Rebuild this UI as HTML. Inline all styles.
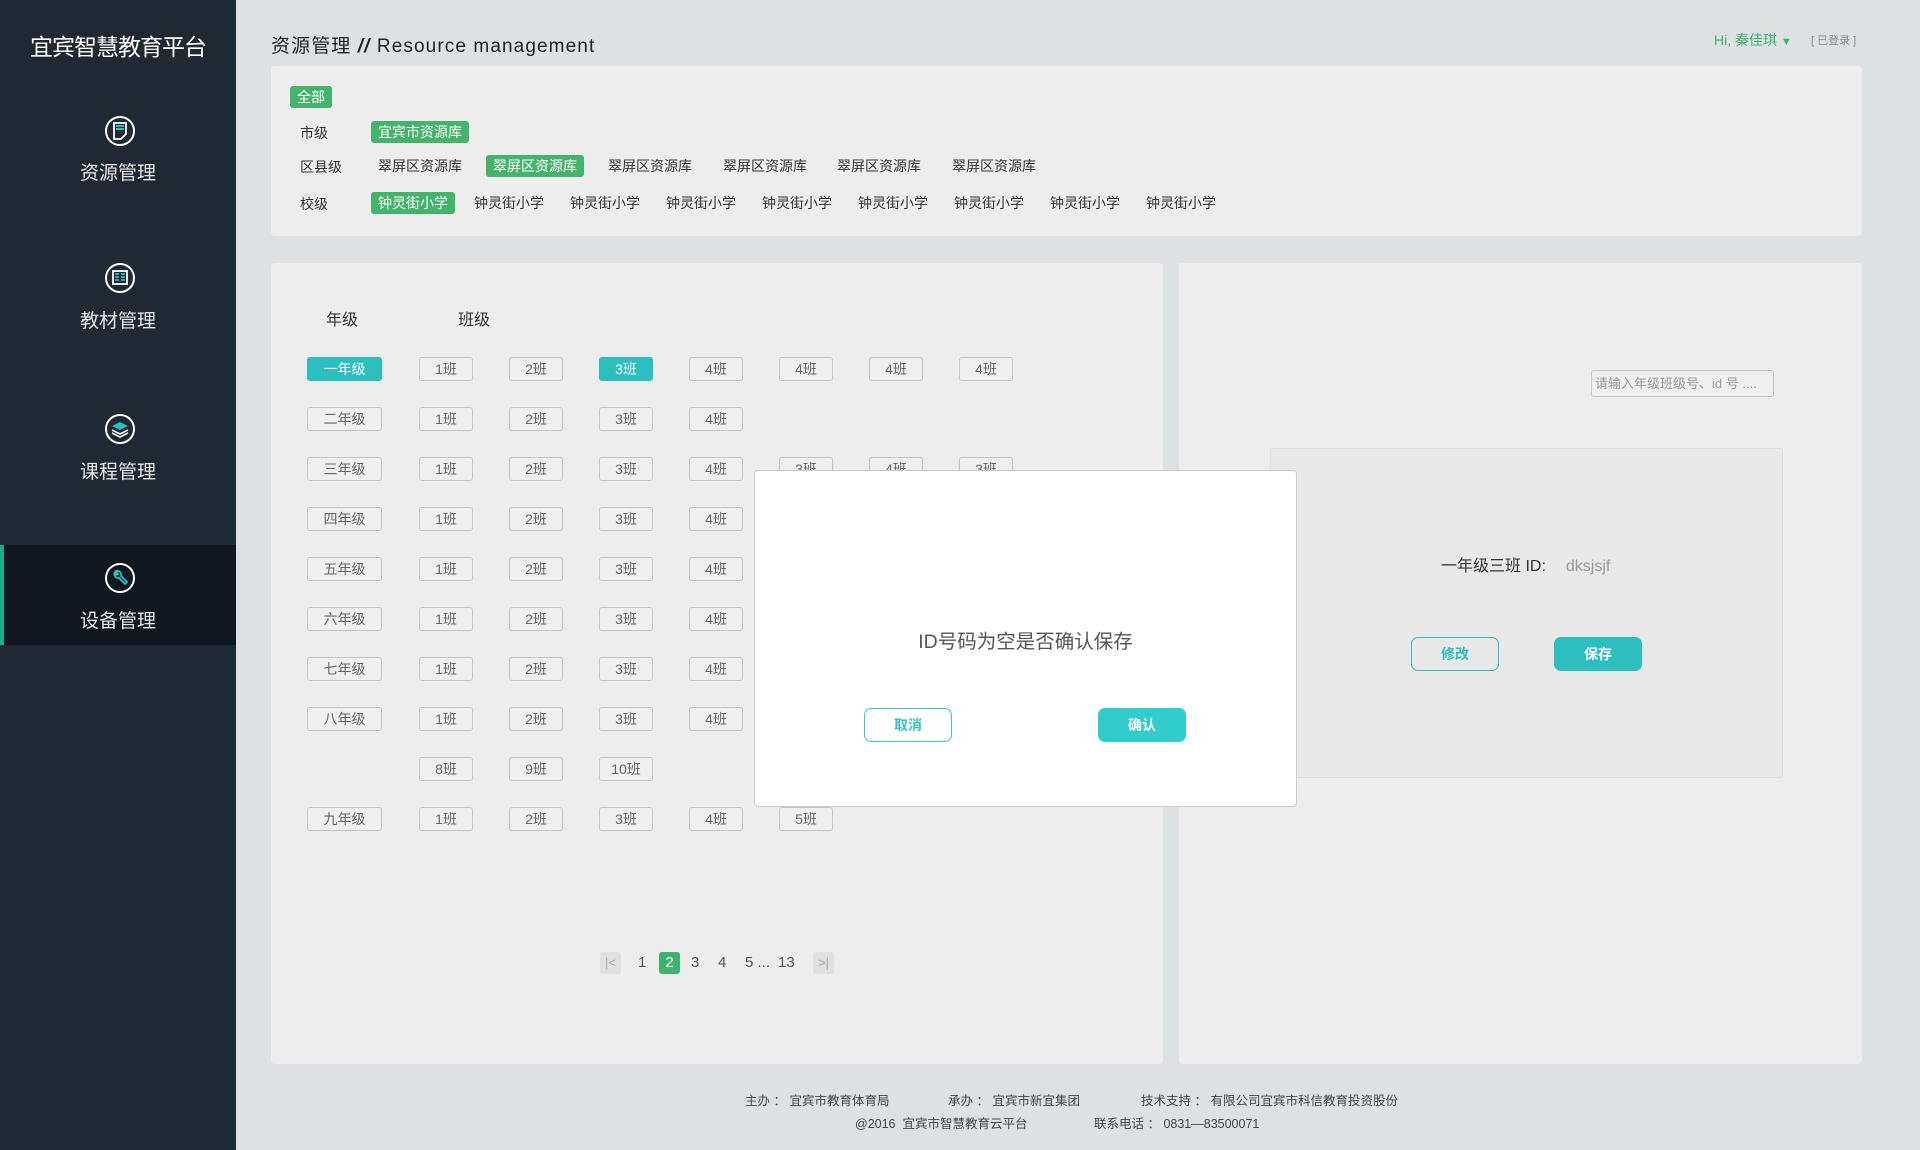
<!DOCTYPE html>
<html><head><meta charset="utf-8"><style>
*{margin:0;padding:0;box-sizing:border-box}
body{width:1920px;height:1150px;overflow:hidden;background:#dee1e2;font-family:"Liberation Sans","Noto Sans CJK SC",sans-serif;position:relative;color:#333}
.a{position:absolute}
#side{left:0;top:0;width:236px;height:1150px;background:#1f2934}
.logo{left:0;width:236px;top:28px;text-align:center;color:#fff;font-size:23px;letter-spacing:-1px}
.mi{left:0;width:236px;text-align:center;color:#e6e6e6;font-size:19px}
.ic{left:103px;width:34px;height:34px}
.act{left:0;top:545px;width:236px;height:100px;background:#111821;border-left:4px solid #1fae8a}
.pnl{background:#ededed;border-radius:4px}
.tag{height:22px;line-height:22px;font-size:14px;color:#333;padding:0 7px;border-radius:3px}
.tg{background:#44b46c;color:#fff}
.lbl{font-size:14px;color:#333}
.b{height:24px;line-height:22px;width:54px;border:1px solid #c4c4c4;border-radius:3px;text-align:center;font-size:14px;color:#666;background:#efefef}
.g{width:75px}
.on{background:#2dbfbf;border-color:#2dbfbf;color:#fff}
.pg{font-size:15px;color:#555;top:952px;height:22px;line-height:22px}
.ft{font-size:12.5px;color:#444;top:0}
</style></head><body>
<div id="side" class="a"></div>
<div class="a logo">宜宾智慧教育平台</div>
<div class="a act"></div>
<svg class="a ic" style="top:114px" viewBox="0 0 34 34"><circle cx="17" cy="17" r="14" fill="none" stroke="#fff" stroke-width="2"/><path d="M11 9h12v11l-5 5h-7z" fill="none" stroke="#fff" stroke-width="1.8"/><path d="M13 12h8M13 15h8" stroke="#2dbfbf" stroke-width="2"/></svg>
<div class="a mi" style="top:158px">资源管理</div>
<svg class="a ic" style="top:261px" viewBox="0 0 34 34"><circle cx="17" cy="17" r="14" fill="none" stroke="#fff" stroke-width="2"/><rect x="10" y="10" width="14" height="13" fill="none" stroke="#fff" stroke-width="1.8"/><path d="M12 13h4M12 16h4M12 19h4M18 13h4M18 16h4M18 19h4" stroke="#2dbfbf" stroke-width="1.8"/></svg>
<div class="a mi" style="top:306px">教材管理</div>
<svg class="a ic" style="top:412px" viewBox="0 0 34 34"><circle cx="17" cy="17" r="14" fill="none" stroke="#fff" stroke-width="2"/><path d="M9 14l8-4 8 4-8 4z" fill="#2dbfbf"/><path d="M9 18l8 4 8-4M9 21l8 4 8-4" fill="none" stroke="#fff" stroke-width="1.6"/></svg>
<div class="a mi" style="top:457px">课程管理</div>
<svg class="a ic" style="top:561px" viewBox="0 0 34 34"><circle cx="17" cy="17" r="14" fill="none" stroke="#fff" stroke-width="2"/><path d="M12 11a4 4 0 0 0 4 6l6 6 2-2-6-6a4 4 0 0 0-5-5l2 3-2 1z" fill="none" stroke="#2dbfbf" stroke-width="1.8"/></svg>
<div class="a mi" style="top:606px">设备管理</div>

<div class="a" style="left:271px;top:31px;font-size:19px;color:#222;letter-spacing:1.1px">资源管理 <b style="font-style:italic">//</b> Resource management</div>
<div class="a" style="left:1714px;top:30px;font-size:14px;color:#3cb46e">Hi, 秦佳琪 <span style="font-size:11px">▼</span></div>
<div class="a" style="left:1811px;top:32px;font-size:11px;color:#888">[ 已登录 ]</div>

<div class="a pnl" style="left:271px;top:66px;width:1591px;height:170px"></div>
<div class="a tag tg" style="left:290px;top:86px">全部</div>
<div class="a lbl" style="left:300px;top:123px">市级</div>
<div class="a tag tg" style="left:371px;top:121px">宜宾市资源库</div>
<div class="a lbl" style="left:300px;top:157px">区县级</div>
<div class="a tag" style="left:371px;top:155px">翠屏区资源库</div>
<div class="a tag tg" style="left:486px;top:155px">翠屏区资源库</div>
<div class="a tag" style="left:601px;top:155px">翠屏区资源库</div>
<div class="a tag" style="left:716px;top:155px">翠屏区资源库</div>
<div class="a tag" style="left:830px;top:155px">翠屏区资源库</div>
<div class="a tag" style="left:945px;top:155px">翠屏区资源库</div>
<div class="a lbl" style="left:300px;top:194px">校级</div>
<div class="a tag tg" style="left:371px;top:192px">钟灵街小学</div>
<div class="a tag" style="left:467px;top:192px">钟灵街小学</div>
<div class="a tag" style="left:563px;top:192px">钟灵街小学</div>
<div class="a tag" style="left:659px;top:192px">钟灵街小学</div>
<div class="a tag" style="left:755px;top:192px">钟灵街小学</div>
<div class="a tag" style="left:851px;top:192px">钟灵街小学</div>
<div class="a tag" style="left:947px;top:192px">钟灵街小学</div>
<div class="a tag" style="left:1043px;top:192px">钟灵街小学</div>
<div class="a tag" style="left:1139px;top:192px">钟灵街小学</div>

<div class="a pnl" style="left:271px;top:263px;width:892px;height:801px"></div>
<div class="a pnl" style="left:1179px;top:263px;width:683px;height:801px"></div>
<div class="a" style="left:326px;top:306px;font-size:16px">年级</div>
<div class="a" style="left:458px;top:306px;font-size:16px">班级</div>

<div class="a b g on" style="left:307px;top:357px">一年级</div>
<div class="a b" style="left:419px;top:357px">1班</div><div class="a b" style="left:509px;top:357px">2班</div><div class="a b on" style="left:599px;top:357px">3班</div><div class="a b" style="left:689px;top:357px">4班</div><div class="a b" style="left:779px;top:357px">4班</div><div class="a b" style="left:869px;top:357px">4班</div><div class="a b" style="left:959px;top:357px">4班</div>
<div class="a b g" style="left:307px;top:407px">二年级</div>
<div class="a b" style="left:419px;top:407px">1班</div><div class="a b" style="left:509px;top:407px">2班</div><div class="a b" style="left:599px;top:407px">3班</div><div class="a b" style="left:689px;top:407px">4班</div>
<div class="a b g" style="left:307px;top:457px">三年级</div>
<div class="a b" style="left:419px;top:457px">1班</div><div class="a b" style="left:509px;top:457px">2班</div><div class="a b" style="left:599px;top:457px">3班</div><div class="a b" style="left:689px;top:457px">4班</div><div class="a b" style="left:779px;top:457px">3班</div><div class="a b" style="left:869px;top:457px">4班</div><div class="a b" style="left:959px;top:457px">3班</div>
<div class="a b g" style="left:307px;top:507px">四年级</div>
<div class="a b" style="left:419px;top:507px">1班</div><div class="a b" style="left:509px;top:507px">2班</div><div class="a b" style="left:599px;top:507px">3班</div><div class="a b" style="left:689px;top:507px">4班</div>
<div class="a b g" style="left:307px;top:557px">五年级</div>
<div class="a b" style="left:419px;top:557px">1班</div><div class="a b" style="left:509px;top:557px">2班</div><div class="a b" style="left:599px;top:557px">3班</div><div class="a b" style="left:689px;top:557px">4班</div>
<div class="a b g" style="left:307px;top:607px">六年级</div>
<div class="a b" style="left:419px;top:607px">1班</div><div class="a b" style="left:509px;top:607px">2班</div><div class="a b" style="left:599px;top:607px">3班</div><div class="a b" style="left:689px;top:607px">4班</div>
<div class="a b g" style="left:307px;top:657px">七年级</div>
<div class="a b" style="left:419px;top:657px">1班</div><div class="a b" style="left:509px;top:657px">2班</div><div class="a b" style="left:599px;top:657px">3班</div><div class="a b" style="left:689px;top:657px">4班</div>
<div class="a b g" style="left:307px;top:707px">八年级</div>
<div class="a b" style="left:419px;top:707px">1班</div><div class="a b" style="left:509px;top:707px">2班</div><div class="a b" style="left:599px;top:707px">3班</div><div class="a b" style="left:689px;top:707px">4班</div>
<div class="a b" style="left:419px;top:757px">8班</div><div class="a b" style="left:509px;top:757px">9班</div><div class="a b" style="left:599px;top:757px">10班</div>
<div class="a b g" style="left:307px;top:807px">九年级</div>
<div class="a b" style="left:419px;top:807px">1班</div><div class="a b" style="left:509px;top:807px">2班</div><div class="a b" style="left:599px;top:807px">3班</div><div class="a b" style="left:689px;top:807px">4班</div><div class="a b" style="left:779px;top:807px">5班</div>

<div class="a pg" style="left:600px;width:21px;background:#e0e0e0;border-radius:3px;text-align:center;color:#aaa;font-size:13px">|&lt;</div>
<div class="a pg" style="left:638px">1</div>
<div class="a pg" style="left:659px;width:21px;background:#3cb46e;color:#fff;border-radius:3px;text-align:center">2</div>
<div class="a pg" style="left:691px">3</div>
<div class="a pg" style="left:718px">4</div>
<div class="a pg" style="left:745px">5 ...</div>
<div class="a pg" style="left:778px">13</div>
<div class="a pg" style="left:813px;width:21px;background:#e0e0e0;border-radius:3px;text-align:center;color:#aaa;font-size:13px">&gt;|</div>

<div class="a" style="left:1591px;top:370px;width:183px;height:27px;border:1px solid #c4c4c4;border-radius:3px;font-size:13px;color:#999;line-height:25px;padding-left:3px;background:#efefef">请输入年级班级号、id 号 ....</div>
<div class="a" style="left:1270px;top:448px;width:513px;height:330px;background:#e8e8e8;border:1px solid #ddd;border-radius:3px"></div>
<div class="a" style="left:1441px;top:552px;font-size:16px;color:#333">一年级三班 ID:<span style="color:#999;margin-left:20px">dksjsjf</span></div>
<div class="a" style="left:1411px;top:637px;width:88px;height:34px;border:1px solid #2dbfbf;border-radius:7px;text-align:center;line-height:32px;color:#2dbfbf;font-size:14px;font-weight:bold">修改</div>
<div class="a" style="left:1554px;top:637px;width:88px;height:34px;background:#2dbfbf;border-radius:7px;text-align:center;line-height:34px;color:#fff;font-size:14px;font-weight:bold">保存</div>

<div class="a" style="left:754px;top:470px;width:543px;height:337px;background:#fff;border:1px solid #ccc;border-radius:4px"></div>
<div class="a" style="left:754px;width:543px;top:625px;text-align:center;font-size:19.5px;color:#555">ID号码为空是否确认保存</div>
<div class="a" style="left:864px;top:708px;width:88px;height:34px;border:1px solid #33cccc;border-radius:7px;text-align:center;line-height:32px;color:#33c6c6;font-size:14px;font-weight:bold">取消</div>
<div class="a" style="left:1098px;top:708px;width:88px;height:34px;background:#33cccc;border-radius:7px;text-align:center;line-height:34px;color:#fff;font-size:14px;font-weight:bold">确认</div>

<div class="a ft" style="left:745px;top:1090px">主办 ： 宜宾市教育体育局</div>
<div class="a ft" style="left:948px;top:1090px">承办 ： 宜宾市新宜集团</div>
<div class="a ft" style="left:1141px;top:1090px">技术支持 ： 有限公司宜宾市科信教育投资股份</div>
<div class="a ft" style="left:855px;top:1113px">@2016&nbsp; 宜宾市智慧教育云平台</div>
<div class="a ft" style="left:1094px;top:1113px">联系电话 ： 0831—83500071</div>
</body></html>
